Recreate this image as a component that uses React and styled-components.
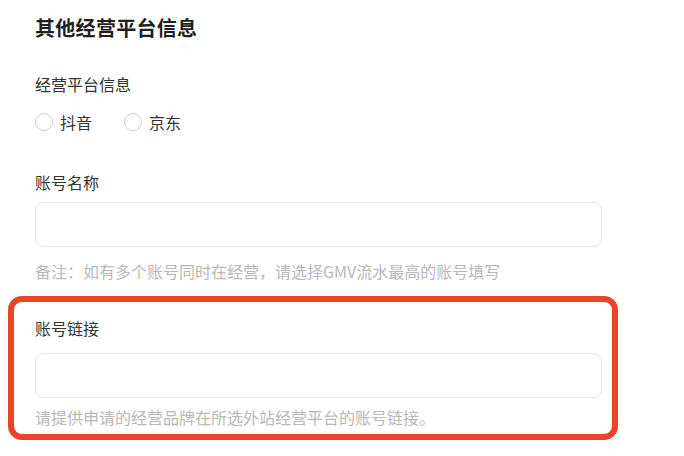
import styled, { createGlobalStyle } from "styled-components"

const GlobalStyle = createGlobalStyle`
  body {
    margin: 0;
    background: #ffffff;
    font-family: "Noto Sans CJK SC", "Liberation Sans", sans-serif;
  }
`

const Page = styled.div`
  padding: 14px 0 28px 35px;
  width: 567px;
`

const Title = styled.h2`
  margin: 0;
  font-size: 20px;
  line-height: 28px;
  font-weight: 700;
  letter-spacing: 0.3px;
  color: #1f1f1f;
`

const Label = styled.div`
  margin-top: ${props => props.top}px;
  font-size: 16px;
  line-height: 24px;
  color: #333333;
`

const RadioRow = styled.div`
  margin-top: 14px;
  display: flex;
  align-items: center;
  gap: 32px;
  height: 24px;
`

const RadioItem = styled.label`
  display: flex;
  align-items: center;
  gap: 7px;
  font-size: 16px;
  line-height: 24px;
  color: #333333;
`

const Circle = styled.span`
  width: 18px;
  height: 18px;
  box-sizing: border-box;
  border: 1px solid #cfcfcf;
  border-radius: 50%;
  background: #fff;
`

const Input = styled.input`
  display: block;
  margin-top: ${props => props.top}px;
  width: 100%;
  height: 45px;
  box-sizing: border-box;
  border: 1px solid #e6e6e6;
  border-radius: 8px;
  outline: none;
  background: #fff;
`

const Hint = styled.div`
  margin-top: ${props => props.top}px;
  font-size: 16px;
  line-height: 24px;
  color: #b8b8b8;
`

const Highlight = styled.div`
  position: relative;
  margin-top: 33px;
  &::after {
    content: "";
    position: absolute;
    top: -20px;
    left: -27px;
    right: -16px;
    bottom: -11px;
    border: 6px solid #e94427;
    border-radius: 14px;
    pointer-events: none;
  }
`

export default function App() {
  return (
    <>
      <GlobalStyle />
      <Page>
        <Title>其他经营平台信息</Title>
        <Label top={30}>经营平台信息</Label>
        <RadioRow>
          <RadioItem><Circle />抖音</RadioItem>
          <RadioItem><Circle />京东</RadioItem>
        </RadioRow>

        <Label top={36}>账号名称</Label>
        <Input top={8} />
        <Hint top={12}>备注：如有多个账号同时在经营，请选择GMV流水最高的账号填写</Hint>

        <Highlight>
          <Label top={0}>账号链接</Label>
          <Input top={13} />
          <Hint top={7}>请提供申请的经营品牌在所选外站经营平台的账号链接。</Hint>
        </Highlight>
      </Page>
    </>
  )
}
